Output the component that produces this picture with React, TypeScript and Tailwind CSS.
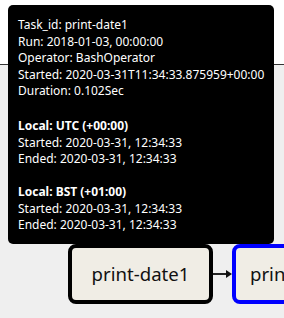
export default function App() {
  const font = { fontFamily: '"Noto Sans", "Open Sans", sans-serif' };
  return (
    <div className="relative w-[284px] h-[318px] overflow-hidden bg-[#efefef]" style={font}>
      <div className="h-[65px] bg-white border-b border-[#333]" />
      <div className="flex items-center pl-[68px] pt-[179px]">
        <div className="w-[145px] h-[60px] shrink-0 rounded-[8px] border-[4px] border-black bg-[#f0ede5] flex items-center justify-center text-[18.6px] text-[#111]">
          print-date1
        </div>
        <div className="flex items-center w-[19px] shrink-0">
          <div className="h-[1.5px] flex-1 bg-[#222]" />
          <svg width="6" height="8" viewBox="0 0 6 8" className="shrink-0">
            <path d="M0 0 L6 4 L0 8 Z" fill="#111" />
          </svg>
        </div>
        <div className="w-[145px] h-[60px] shrink-0 rounded-[8px] border-[4px] border-[#0000ff] bg-[#f0ede5] flex items-center pl-[14px] text-[18.6px] text-[#111] overflow-hidden whitespace-nowrap">
          print-date2
        </div>
      </div>
      <div className="absolute left-[8px] top-[5px] w-[266px] h-[239px] rounded-[5px] bg-black text-white text-[12px] leading-[16.5px] px-[10px] pt-[12px]">
        <div>Task_id: print-date1</div>
        <div>Run: 2018-01-03, 00:00:00</div>
        <div>Operator: BashOperator</div>
        <div className="whitespace-nowrap">Started: 2020-03-31T11:34:33.875959+00:00</div>
        <div>Duration: 0.102Sec</div>
        <div className="h-[16.5px]" />
        <div className="h-[2px]" />
        <div className="font-bold">Local: UTC (+00:00)</div>
        <div>Started: 2020-03-31, 12:34:33</div>
        <div>Ended: 2020-03-31, 12:34:33</div>
        <div className="h-[16.5px]" />
        <div className="font-bold">Local: BST (+01:00)</div>
        <div>Started: 2020-03-31, 12:34:33</div>
        <div>Ended: 2020-03-31, 12:34:33</div>
      </div>
    </div>
  );
}
